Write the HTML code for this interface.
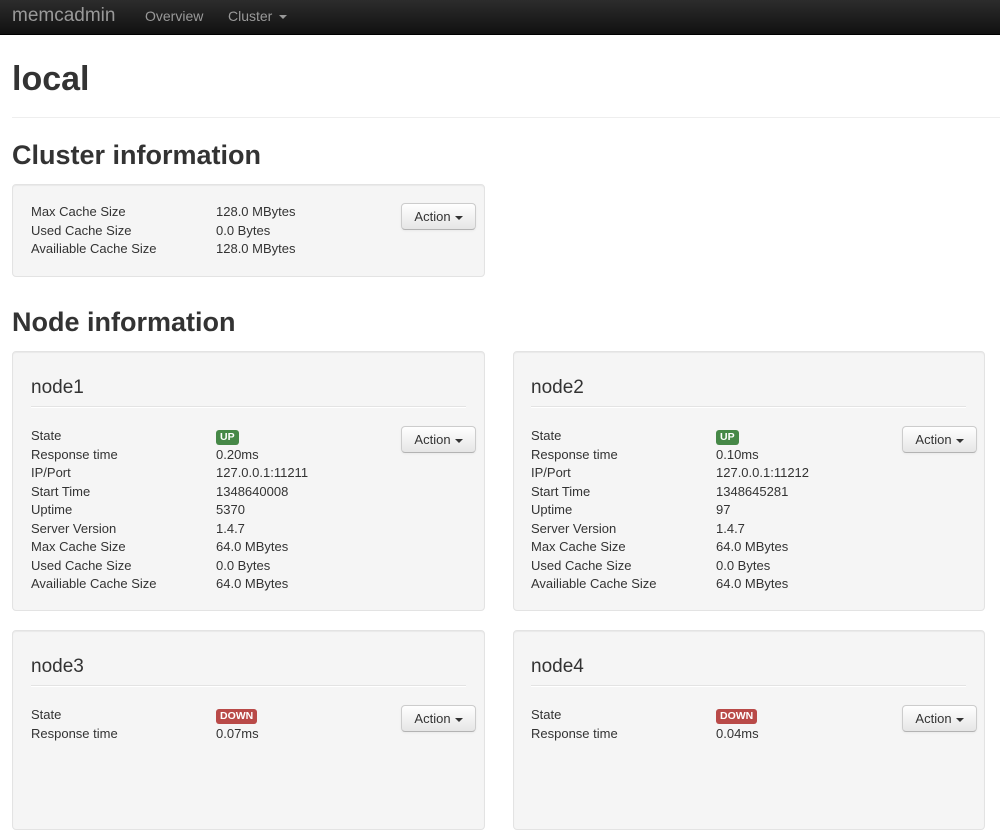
<!DOCTYPE html>
<html><head><style>
*{margin:0;padding:0;box-sizing:border-box}
body{width:1000px;height:743px;overflow:hidden;background:#fff;font-family:"Liberation Sans",sans-serif;color:#333;position:relative}
.nav{position:absolute;left:0;top:0;width:1000px;height:35px;background:linear-gradient(#2c2c2c,#111);border-bottom:1px solid #000}
.nav span{position:absolute;color:#999;font-size:14px;top:8px}
.nav .brand{font-size:19px;top:5px;left:12px}
.caret{display:inline-block;width:0;height:0;border-left:4px solid transparent;border-right:4px solid transparent;border-top:4px solid currentColor;vertical-align:middle;margin-left:4px}
.a{position:absolute}
h1{position:absolute;left:12px;top:60px;font-size:34px;font-weight:bold;color:#333}
h2{position:absolute;left:12px;font-size:27px;font-weight:bold;color:#333}
.hr{position:absolute;left:12px;right:0;top:117px;border-top:1px solid #eee}
.well{position:absolute;background:#f5f5f5;border:1px solid #e3e3e3;border-radius:4px;box-shadow:inset 0 1px 1px rgba(0,0,0,.05)}
.row{position:absolute;font-size:13px;line-height:18.5px}
.row div{position:absolute;white-space:nowrap}
.btn{position:absolute;width:75px;height:27px;border:1px solid #ccc;border-bottom-color:#b3b3b3;border-radius:4px;background:linear-gradient(#fff,#e6e6e6);font-size:13px;color:#333;text-align:center;line-height:25px;box-shadow:0 1px 2px rgba(0,0,0,.05)}
.nh{position:absolute;font-size:19px;color:#333}
.nhr{position:absolute;height:0;border-top:1px solid #e3e3e3;border-bottom:1px solid #fff}
.lab{display:inline-block;color:#fff;font-size:10.5px;font-weight:bold;padding:1px 4px;border-radius:3px;line-height:13px}
.up{background:#468847}.down{background:#b94a48}
</style></head><body>
<div class="nav"><span class="brand">memcadmin</span><span style="left:145px">Overview</span><span style="left:228px">Cluster<i class="caret" style="margin-left:7px"></i></span></div>
<h1>local</h1>
<div class="hr"></div>
<h2 style="top:140px">Cluster information</h2>
<div class="well" style="left:12px;top:184px;width:473px;height:93px"></div>
<div class="row" style="left:31px;top:203px"><div style="left:0">Max Cache Size<br>Used Cache Size<br>Availiable Cache Size</div><div style="left:185px">128.0 MBytes<br>0.0 Bytes<br>128.0 MBytes</div></div>
<div class="btn" style="left:401px;top:203px">Action<i class="caret"></i></div>
<h2 style="top:307px">Node information</h2>

<div class="well" style="left:12px;top:351px;width:473px;height:260px"></div>
<div class="nh" style="left:31px;top:377px">node1</div><div class="nhr" style="left:31px;top:406px;width:435px"></div>
<div class="row" style="left:31px;top:427px"><div style="left:0">State<br>Response time<br>IP/Port<br>Start Time<br>Uptime<br>Server Version<br>Max Cache Size<br>Used Cache Size<br>Availiable Cache Size</div><div style="left:185px"><span class="lab up">UP</span><br>0.20ms<br>127.0.0.1:11211<br>1348640008<br>5370<br>1.4.7<br>64.0 MBytes<br>0.0 Bytes<br>64.0 MBytes</div></div>
<div class="btn" style="left:401px;top:426px">Action<i class="caret"></i></div>

<div class="well" style="left:513px;top:351px;width:472px;height:260px"></div>
<div class="nh" style="left:531px;top:377px">node2</div><div class="nhr" style="left:531px;top:406px;width:435px"></div>
<div class="row" style="left:531px;top:427px"><div style="left:0">State<br>Response time<br>IP/Port<br>Start Time<br>Uptime<br>Server Version<br>Max Cache Size<br>Used Cache Size<br>Availiable Cache Size</div><div style="left:185px"><span class="lab up">UP</span><br>0.10ms<br>127.0.0.1:11212<br>1348645281<br>97<br>1.4.7<br>64.0 MBytes<br>0.0 Bytes<br>64.0 MBytes</div></div>
<div class="btn" style="left:902px;top:426px">Action<i class="caret"></i></div>

<div class="well" style="left:12px;top:630px;width:473px;height:200px"></div>
<div class="nh" style="left:31px;top:656px">node3</div><div class="nhr" style="left:31px;top:685px;width:435px"></div>
<div class="row" style="left:31px;top:706px"><div style="left:0">State<br>Response time</div><div style="left:185px"><span class="lab down">DOWN</span><br>0.07ms</div></div>
<div class="btn" style="left:401px;top:705px">Action<i class="caret"></i></div>

<div class="well" style="left:513px;top:630px;width:472px;height:200px"></div>
<div class="nh" style="left:531px;top:656px">node4</div><div class="nhr" style="left:531px;top:685px;width:435px"></div>
<div class="row" style="left:531px;top:706px"><div style="left:0">State<br>Response time</div><div style="left:185px"><span class="lab down">DOWN</span><br>0.04ms</div></div>
<div class="btn" style="left:902px;top:705px">Action<i class="caret"></i></div>
</body></html>
